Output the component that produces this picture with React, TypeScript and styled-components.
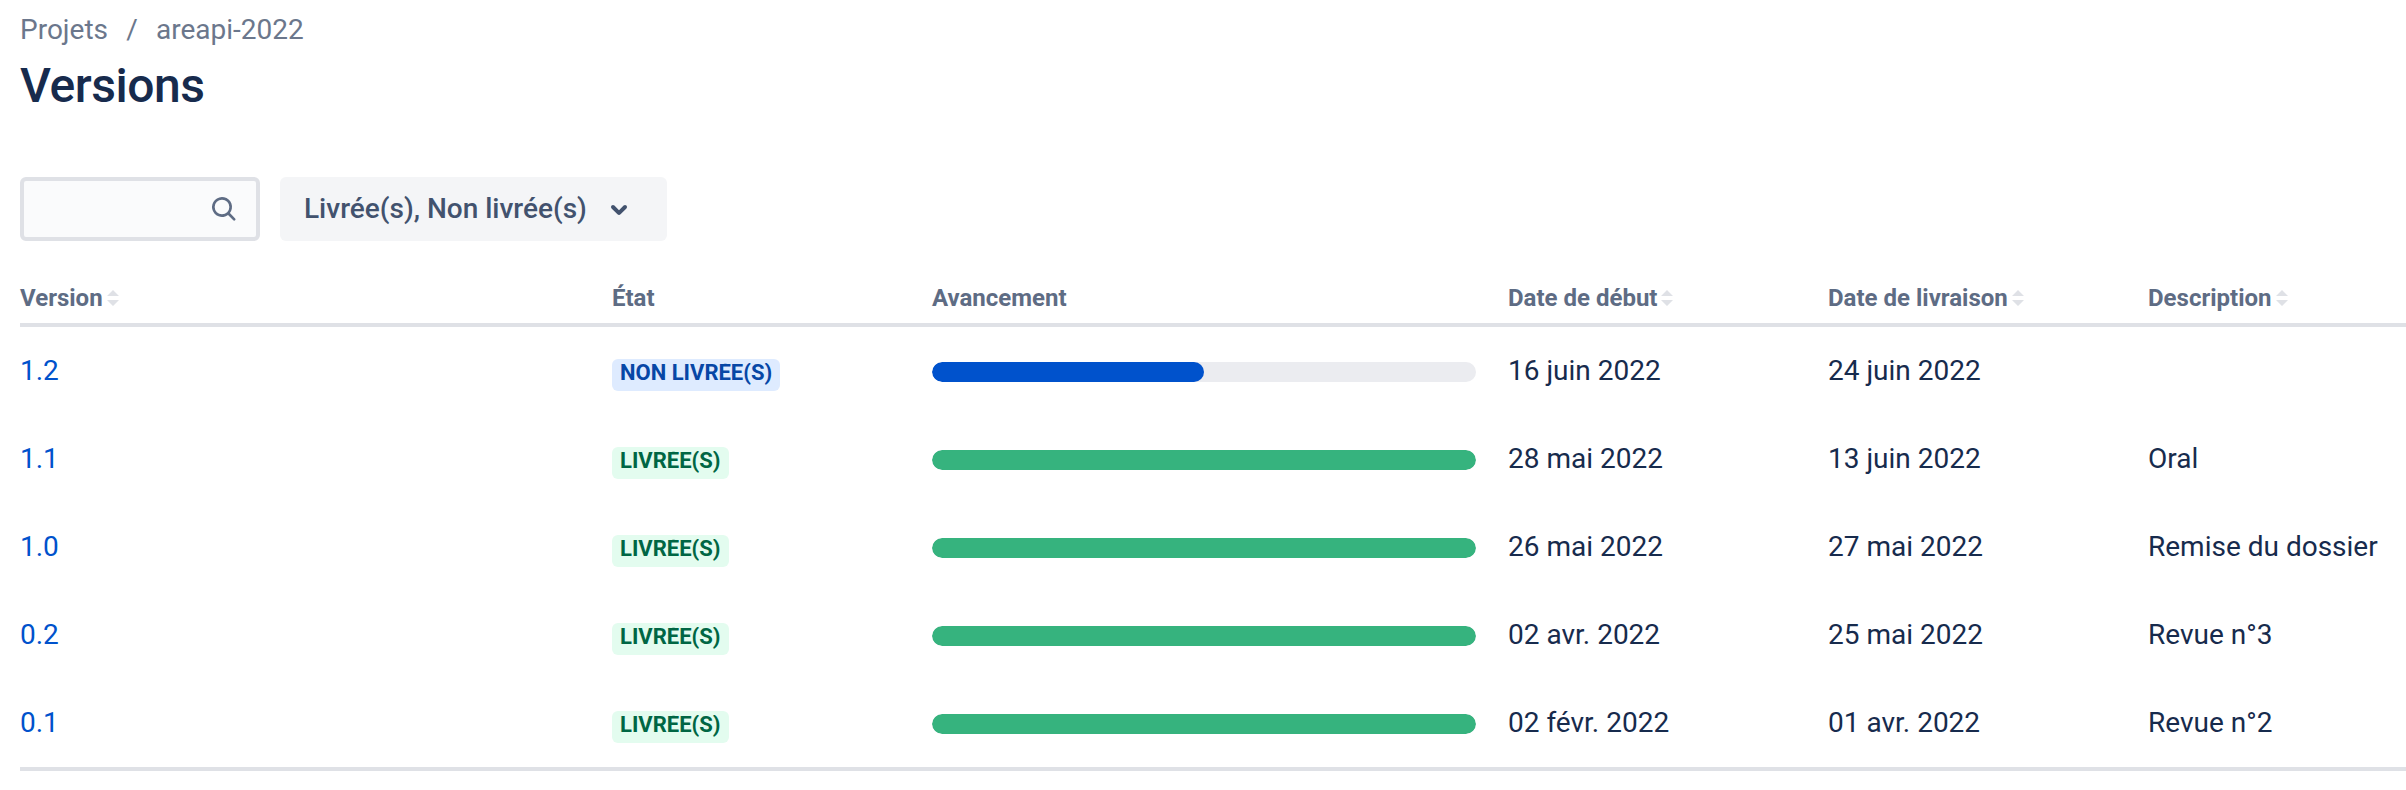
import React from "react";
import styled, { createGlobalStyle } from "styled-components";

const GlobalStyle = createGlobalStyle`
  * { box-sizing: border-box; }
  body {
    margin: 0;
    background: #ffffff;
    color: #172b4d;
    font-family: Roboto, "Noto Sans", sans-serif;
    font-size: 28px;
    line-height: 40px;
    overflow: hidden;
  }
`;

const Page = styled.main`
  height: 790px;
  padding: 10px 0 0 20px;
  overflow: hidden;
`;

const Breadcrumbs = styled.nav`
  display: flex;
  height: 40px;
  color: #6b778c;
`;

const Separator = styled.span`
  width: 48px;
  text-align: center;
`;

const Title = styled.h1`
  margin: 8px 0 0;
  font-size: 48px;
  font-weight: 500;
  line-height: 56px;
  letter-spacing: -0.01em;
`;

const Toolbar = styled.div`
  display: flex;
  gap: 20px;
  margin-top: 63px;
`;

const SearchField = styled.div`
  display: flex;
  align-items: center;
  justify-content: flex-end;
  width: 240px;
  height: 64px;
  padding-right: 16px;
  border: 4px solid #dfe1e6;
  border-radius: 6px;
  background: #fafbfc;
  color: #5e6c84;
`;

const FilterButton = styled.button`
  display: flex;
  align-items: center;
  width: 387px;
  height: 64px;
  padding: 0 24px;
  border: 0;
  border-radius: 6px;
  background: #f4f5f7;
  color: #42526e;
  font: 500 28px/64px Roboto, "Noto Sans", sans-serif;
  white-space: nowrap;
`;

const FilterLabel = styled.span`
  width: 291px;
  text-align: left;
`;

const Table = styled.div`
  margin-top: 32px;
  border-bottom: 4px solid #dfe1e6;
`;

const Row = styled.div`
  display: grid;
  grid-template-columns: 592px 320px 576px 320px 320px 1fr;
  height: 88px;
  padding-top: 24px;
`;

const HeaderRow = styled(Row)`
  height: 54px;
  padding-top: 5px;
  border-bottom: 4px solid #dfe1e6;
  color: #5e6c84;
  font-size: 24px;
  font-weight: 700;
`;

const HeaderCell = styled.div`
  display: flex;
  align-items: center;
  height: 40px;
  gap: 4px;
  white-space: nowrap;
`;

const Cell = styled.div`
  white-space: nowrap;
`;

const VersionLink = styled.a`
  color: #0052cc;
  text-decoration: none;
`;

const Badge = styled.span<{ $released: boolean }>`
  display: block;
  width: fit-content;
  height: 32px;
  margin-top: 8px;
  padding: 4px 0 6px;
  border-radius: 6px;
  background: ${(p) => (p.$released ? "#e3fcef" : "#deebff")};
  color: ${(p) => (p.$released ? "#006644" : "#0747a6")};
  font-size: 22px;
  font-weight: 700;
  line-height: 20px;
  text-transform: uppercase;
`;

const BadgeText = styled.span`
  display: block;
  height: 22px;
  padding: 0 8px;
  overflow: hidden;
`;

const Track = styled.div`
  width: 544px;
  height: 20px;
  margin-top: 11px;
  border-radius: 10px;
  background: #ebecf0;
  overflow: hidden;
`;

const Fill = styled.div<{ $done: boolean }>`
  height: 100%;
  border-radius: 10px;
  background: ${(p) => (p.$done ? "#36b37e" : "#0052cc")};
`;

const SearchIcon = () => (
  <svg width="32" height="32" viewBox="0 0 24 24" fill="currentColor">
    <path
      fillRule="evenodd"
      d="M16.436 15.085l3.94 4.01a1 1 0 0 1-1.425 1.402l-3.938-4.006a7.5 7.5 0 1 1 1.423-1.406zM10.5 16a5.5 5.5 0 1 0 0-11 5.5 5.5 0 0 0 0 11z"
    />
  </svg>
);

const ChevronIcon = () => (
  <svg width="48" height="48" viewBox="0 0 24 24" fill="currentColor">
    <path d="M8.292 10.293a1.009 1.009 0 0 0 0 1.419l2.939 2.965c.218.215.5.322.779.322s.556-.107.769-.322l2.93-2.955a1.01 1.01 0 0 0 0-1.419.987.987 0 0 0-1.406 0l-2.298 2.317-2.307-2.327a.99.99 0 0 0-1.406 0z" />
  </svg>
);

const SortIcon = () => (
  <svg width="12" height="16" viewBox="0 0 12 16" fill="#dfe1e6">
    <path d="M0 6L6 0L12 6ZM0 10H12L6 16Z" />
  </svg>
);

const columns = [
  { label: "Version", sortable: true },
  { label: "État", sortable: false },
  { label: "Avancement", sortable: false },
  { label: "Date de début", sortable: true },
  { label: "Date de livraison", sortable: true },
  { label: "Description", sortable: true },
];

const versions = [
  { name: "1.2", released: false, progress: 50, start: "16 juin 2022", end: "24 juin 2022", text: "" },
  { name: "1.1", released: true, progress: 100, start: "28 mai 2022", end: "13 juin 2022", text: "Oral" },
  { name: "1.0", released: true, progress: 100, start: "26 mai 2022", end: "27 mai 2022", text: "Remise du dossier" },
  { name: "0.2", released: true, progress: 100, start: "02 avr. 2022", end: "25 mai 2022", text: "Revue n°3" },
  { name: "0.1", released: true, progress: 100, start: "02 févr. 2022", end: "01 avr. 2022", text: "Revue n°2" },
];

export default function App() {
  return (
    <>
      <GlobalStyle />
      <Page>
        <Breadcrumbs>
          <span>Projets</span>
          <Separator>/</Separator>
          <span>areapi-2022</span>
        </Breadcrumbs>
        <Title>Versions</Title>
        <Toolbar>
          <SearchField>
            <SearchIcon />
          </SearchField>
          <FilterButton>
            <FilterLabel>Livrée(s), Non livrée(s)</FilterLabel>
            <ChevronIcon />
          </FilterButton>
        </Toolbar>
        <Table>
          <HeaderRow>
            {columns.map((c) => (
              <HeaderCell key={c.label}>
                {c.label}
                {c.sortable && <SortIcon />}
              </HeaderCell>
            ))}
          </HeaderRow>
          {versions.map((v) => (
            <Row key={v.name}>
              <Cell>
                <VersionLink>{v.name}</VersionLink>
              </Cell>
              <Cell>
                <Badge $released={v.released}>
                  <BadgeText>{v.released ? "Livrée(s)" : "Non livrée(s)"}</BadgeText>
                </Badge>
              </Cell>
              <Cell>
                <Track>
                  <Fill $done={v.progress === 100} style={{ width: `${v.progress}%` }} />
                </Track>
              </Cell>
              <Cell>{v.start}</Cell>
              <Cell>{v.end}</Cell>
              <Cell>{v.text}</Cell>
            </Row>
          ))}
        </Table>
      </Page>
    </>
  );
}
